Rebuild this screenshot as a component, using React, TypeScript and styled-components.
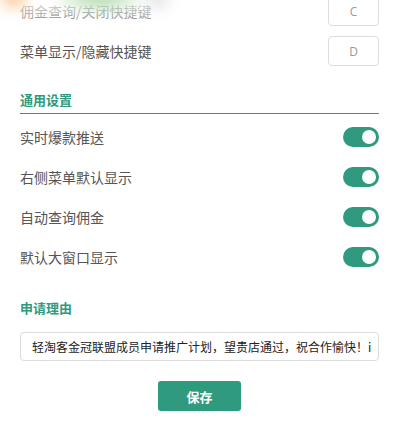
import styled, { createGlobalStyle } from 'styled-components';

const GREEN = "#2f9a7e";

const GlobalStyle = createGlobalStyle({
    "html, body": {
        margin: 0,
        padding: 0,
        background: "#fff",
        overflow: "hidden",
    },
    body: {
        fontFamily: '"Microsoft YaHei", "Noto Sans CJK SC", "Noto Sans", sans-serif',
    },
});

const Page = styled.div({
    position: "relative",
    width: 400,
    height: 432,
    overflow: "hidden",
    padding: "0 21px 0 20px",
    boxSizing: "border-box",
});

const Content = styled.div({
    marginTop: -4,
});

const ShortcutRow = styled.div({
    display: "flex",
    alignItems: "center",
    justifyContent: "space-between",
    height: 30,
    marginBottom: 10,
});

const Label = styled.span({
    fontSize: 14,
    color: "#555",
});

const KeyBox = styled.div({
    width: 51,
    height: 30,
    boxSizing: "border-box",
    border: "1px solid #dcdcdc",
    borderRadius: 4,
    display: "flex",
    alignItems: "center",
    justifyContent: "center",
    fontFamily: '"Open Sans", "Noto Sans", sans-serif',
    fontSize: 12,
    color: "#999",
});

type HeadingProps = {
    $underline?: boolean,
};

const Heading = styled.div<HeadingProps>(({ $underline }) => ({
    fontSize: 13,
    fontWeight: 700,
    color: GREEN,
    lineHeight: "20px",
    marginTop: $underline ? 24 : 0,
    paddingBottom: $underline ? 3 : 0,
    borderBottom: $underline ? `1px solid ${GREEN}` : "none",
}));

const ToggleList = styled.div({
    paddingTop: 3,
});

const ToggleRow = styled.div({
    display: "flex",
    alignItems: "center",
    justifyContent: "space-between",
    height: 40,
});

type SwitchProps = {
    $on: boolean,
};

const Switch = styled.div<SwitchProps>(({ $on }) => ({
    width: 36,
    height: 20,
    borderRadius: 10,
    background: $on ? GREEN : "#ccc",
    display: "flex",
    alignItems: "center",
    justifyContent: $on ? "flex-end" : "flex-start",
    padding: "0 3px",
    boxSizing: "border-box",
    "&::after": {
        content: '""',
        width: 14,
        height: 14,
        borderRadius: "50%",
        background: "#fff",
    },
}));

const ReasonSection = styled.div({
    marginTop: 21,
});

const ReasonInput = styled.input({
    display: "block",
    width: "100%",
    height: 29,
    marginTop: 14,
    boxSizing: "border-box",
    border: "1px solid #dcdcdc",
    borderRadius: 4,
    padding: "0 7px 0 11px",
    fontFamily: '"Microsoft YaHei", "Noto Sans CJK SC", sans-serif',
    fontSize: 12,
    color: "#222",
    outline: "none",
});

const Actions = styled.div({
    display: "flex",
    justifyContent: "center",
    marginTop: 20,
});

const SaveButton = styled.button({
    width: 83,
    height: 30,
    border: "none",
    borderRadius: 3,
    background: GREEN,
    color: "#fff",
    fontFamily: '"Microsoft YaHei", "Noto Sans CJK SC", sans-serif',
    fontSize: 13,
    fontWeight: 700,
    cursor: "pointer",
});

// blurred picture peeking over the top edge
const Blur = styled.div({
    position: "absolute",
    top: -14,
    left: -10,
    width: 200,
    height: 44,
    pointerEvents: "none",
    filter: "blur(7px)",
    background: [
        "radial-gradient(ellipse 18px 13px at 24px 12px, rgba(240,165,80,0.9), rgba(240,165,80,0) 100%)",
        "radial-gradient(ellipse 50px 15px at 110px 12px, rgba(140,200,130,0.85), rgba(140,200,130,0) 100%)",
        "radial-gradient(ellipse 14px 12px at 168px 14px, rgba(150,150,150,0.45), rgba(150,150,150,0) 100%)",
        "linear-gradient(to bottom, rgba(255,255,255,0.8) 40%, rgba(255,255,255,0.45) 75%, rgba(255,255,255,0) 100%)",
    ].join(", "),
});

const shortcuts = [
    { label: "佣金查询/关闭快捷键", key: "C" },
    { label: "菜单显示/隐藏快捷键", key: "D" },
];

const toggles = [
    { label: "实时爆款推送", on: true },
    { label: "右侧菜单默认显示", on: true },
    { label: "自动查询佣金", on: true },
    { label: "默认大窗口显示", on: true },
];

export default function App() {
    return (
        <>
            <GlobalStyle />
            <Page>
                <Content>
                    {shortcuts.map(s => (
                        <ShortcutRow key={s.key}>
                            <Label>{s.label}</Label>
                            <KeyBox>{s.key}</KeyBox>
                        </ShortcutRow>
                    ))}
                    <Heading $underline>通用设置</Heading>
                    <ToggleList>
                        {toggles.map(t => (
                            <ToggleRow key={t.label}>
                                <Label>{t.label}</Label>
                                <Switch $on={t.on} />
                            </ToggleRow>
                        ))}
                    </ToggleList>
                    <ReasonSection>
                        <Heading>申请理由</Heading>
                        <ReasonInput defaultValue="轻淘客金冠联盟成员申请推广计划，望贵店通过，祝合作愉快！ipush" />
                    </ReasonSection>
                    <Actions>
                        <SaveButton>保存</SaveButton>
                    </Actions>
                </Content>
                <Blur />
            </Page>
        </>
    );
}
